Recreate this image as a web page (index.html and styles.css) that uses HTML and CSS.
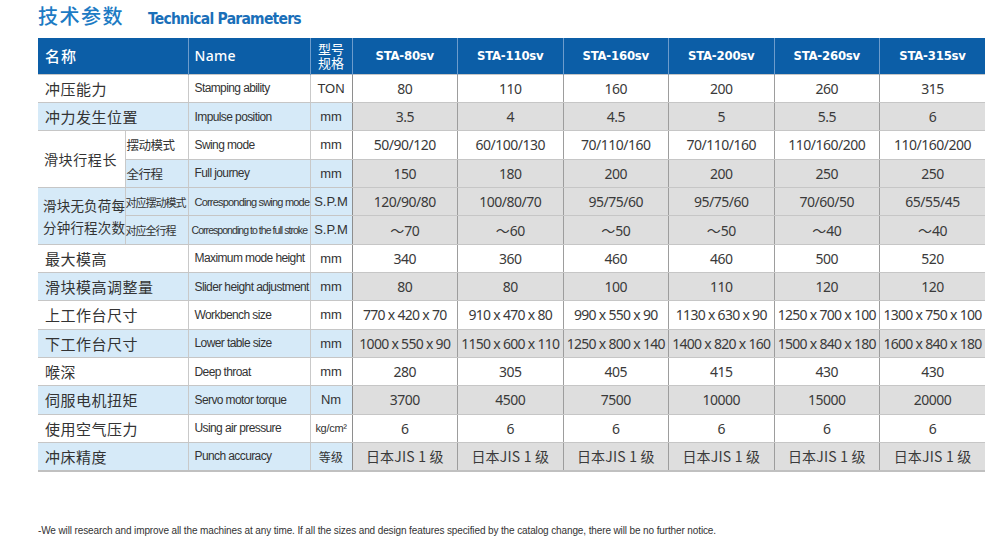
FILE: index.html
```html
<!DOCTYPE html>
<html lang="zh">
<head>
<meta charset="utf-8">
<title>技术参数 Technical Parameters</title>
<link rel="stylesheet" href="styles.css">
</head>
<body>
<div class="page">
  <div class="title">
    <span class="title-cn">技术参数</span>
    <span class="title-en">Technical Parameters</span>
  </div>
  <table class="spec">
    <colgroup>
      <col class="c-g"><col class="c-s"><col class="c-en"><col class="c-u">
      <col class="c-d"><col class="c-d"><col class="c-d"><col class="c-d"><col class="c-d"><col class="c-d">
    </colgroup>
    <thead>
      <tr>
        <th colspan="2" class="h-cn">名称</th>
        <th class="h-en">Name</th>
        <th class="h-u"><span class="ln">型号</span><span class="ln">规格</span></th>
        <th>STA-80sv</th><th>STA-110sv</th><th>STA-160sv</th><th>STA-200sv</th><th>STA-260sv</th><th>STA-315sv</th>
      </tr>
    </thead>
    <tbody>
      <tr>
        <td colspan="2" class="cn">冲压能力</td><td class="en">Stamping ability</td><td class="u">TON</td>
        <td>80</td><td>110</td><td>160</td><td>200</td><td>260</td><td>315</td>
      </tr>
      <tr class="alt">
        <td colspan="2" class="cn">冲力发生位置</td><td class="en">Impulse position</td><td class="u">mm</td>
        <td>3.5</td><td>4</td><td>4.5</td><td>5</td><td>5.5</td><td>6</td>
      </tr>
      <tr>
        <td rowspan="2" class="cn grp">滑块行程长</td><td class="sub">摆动模式</td><td class="en">Swing mode</td><td class="u">mm</td>
        <td>50/90/120</td><td>60/100/130</td><td>70/110/160</td><td>70/110/160</td><td>110/160/200</td><td>110/160/200</td>
      </tr>
      <tr class="alt">
        <td class="sub">全行程</td><td class="en">Full journey</td><td class="u">mm</td>
        <td>150</td><td>180</td><td>200</td><td>200</td><td>250</td><td>250</td>
      </tr>
      <tr class="alt">
        <td rowspan="2" class="cn grp two">滑块无负荷每<br>分钟行程次数</td><td class="sub tight">对应摆动模式</td><td class="en tight">Corresponding swing mode</td><td class="u">S.P.M</td>
        <td>120/90/80</td><td>100/80/70</td><td>95/75/60</td><td>95/75/60</td><td>70/60/50</td><td>65/55/45</td>
      </tr>
      <tr class="alt">
        <td class="sub tight">对应全行程</td><td class="en tighter">Corresponding to the full stroke</td><td class="u">S.P.M</td>
        <td><span class="tilde">～</span>70</td><td><span class="tilde">～</span>60</td><td><span class="tilde">～</span>50</td><td><span class="tilde">～</span>50</td><td><span class="tilde">～</span>40</td><td><span class="tilde">～</span>40</td>
      </tr>
      <tr>
        <td colspan="2" class="cn">最大模高</td><td class="en">Maximum mode height</td><td class="u">mm</td>
        <td>340</td><td>360</td><td>460</td><td>460</td><td>500</td><td>520</td>
      </tr>
      <tr class="alt">
        <td colspan="2" class="cn">滑块模高调整量</td><td class="en">Slider height adjustment</td><td class="u">mm</td>
        <td>80</td><td>80</td><td>100</td><td>110</td><td>120</td><td>120</td>
      </tr>
      <tr>
        <td colspan="2" class="cn">上工作台尺寸</td><td class="en">Workbench size</td><td class="u">mm</td>
        <td class="dim">770 x 420 x 70</td><td class="dim">910 x 470 x 80</td><td class="dim">990 x 550 x 90</td><td class="dim">1130 x 630 x 90</td><td class="dim">1250 x 700 x 100</td><td class="dim">1300 x 750 x 100</td>
      </tr>
      <tr class="alt">
        <td colspan="2" class="cn">下工作台尺寸</td><td class="en">Lower table size</td><td class="u">mm</td>
        <td class="dim">1000 x 550 x 90</td><td class="dim">1150 x 600 x 110</td><td class="dim">1250 x 800 x 140</td><td class="dim">1400 x 820 x 160</td><td class="dim">1500 x 840 x 180</td><td class="dim">1600 x 840 x 180</td>
      </tr>
      <tr>
        <td colspan="2" class="cn">喉深</td><td class="en">Deep throat</td><td class="u">mm</td>
        <td>280</td><td>305</td><td>405</td><td>415</td><td>430</td><td>430</td>
      </tr>
      <tr class="alt">
        <td colspan="2" class="cn">伺服电机扭矩</td><td class="en">Servo motor torque</td><td class="u">Nm</td>
        <td>3700</td><td>4500</td><td>7500</td><td>10000</td><td>15000</td><td>20000</td>
      </tr>
      <tr>
        <td colspan="2" class="cn">使用空气压力</td><td class="en">Using air pressure</td><td class="u small">kg/cm²</td>
        <td>6</td><td>6</td><td>6</td><td>6</td><td>6</td><td>6</td>
      </tr>
      <tr class="alt">
        <td colspan="2" class="cn">冲床精度</td><td class="en">Punch accuracy</td><td class="u cjk">等级</td>
        <td class="cjk">日本JIS 1 级</td><td class="cjk">日本JIS 1 级</td><td class="cjk">日本JIS 1 级</td><td class="cjk">日本JIS 1 级</td><td class="cjk">日本JIS 1 级</td><td class="cjk">日本JIS 1 级</td>
      </tr>
    </tbody>
  </table>
  <p class="note">-We will research and improve all the machines at any time. If all the sizes and design features specified by the catalog change, there will be no further notice.</p>
</div>
</body>
</html>
```

FILE: styles.css
```css
* { box-sizing: border-box; }

body {
  margin: 0;
  background: #ffffff;
  color: #333333;
  font-family: "Noto Sans CJK SC", "Noto Sans", sans-serif;
}

.page {
  width: 1000px;
  height: 542px;
  padding: 0 0 0 38px;
  overflow: hidden;
}

.title {
  display: flex;
  align-items: baseline;
  gap: 24px;
  height: 38px;
  padding-top: 1px;
}

.title-cn {
  font-family: "Noto Sans CJK SC", sans-serif;
  font-size: 20px;
  font-weight: 500;
  color: #1d7bc4;
  letter-spacing: 1.5px;
}

.title-en {
  font-family: "DejaVu Sans Condensed", "DejaVu Sans", sans-serif;
  font-weight: bold;
  font-size: 15.5px;
  color: #1a6fb9;
  letter-spacing: -0.75px;
}

.spec {
  border-collapse: collapse;
  table-layout: fixed;
  width: 947px;
}

.c-g { width: 87px; }
.c-s { width: 63px; }
.c-en { width: 122px; }
.c-u { width: 42px; }
.c-d { width: 105.5px; }

.spec th {
  height: 36px;
  background: #0c5ea7;
  color: #ffffff;
  font-family: "DejaVu Sans Condensed", "DejaVu Sans", sans-serif;
  font-weight: bold;
  font-size: 13px;
  letter-spacing: -0.2px;
  border-left: 1px solid #6d9ccc;
  padding: 0;
  text-align: center;
}

.spec th:first-child { border-left: none; }

.spec th.h-cn {
  text-align: left;
  padding-left: 7px;
  font-family: "Noto Sans CJK SC", sans-serif;
  font-weight: 500;
  font-size: 15px;
  letter-spacing: 1px;
}

.spec th.h-en {
  text-align: left;
  padding-left: 6px;
  font-family: "Noto Sans", sans-serif;
  font-weight: 500;
  font-size: 14px;
  letter-spacing: 0.3px;
}

.spec th.h-u {
  font-family: "Noto Sans CJK SC", sans-serif;
  font-weight: 400;
  font-size: 13px;
  letter-spacing: 0;
}

.ln {
  display: block;
  height: 14px;
  line-height: 14px;
}

.spec td {
  height: 28.35px;
  padding: 0;
  text-align: center;
  vertical-align: middle;
  white-space: nowrap;
  overflow: visible;
  font-family: "Noto Sans", sans-serif;
  font-size: 14px;
  letter-spacing: -0.5px;
  color: #3a3a3a;
  background: #ffffff;
  border-top: 1px solid #c6c6c6;
  border-bottom: 1px solid #c6c6c6;
  border-left: 1px solid #9d9d9d;
}

.spec tbody tr:last-child td { border-bottom: 2px solid #c0c0c0; }

.spec tr.alt td { background: #dedede; }

.spec td.cn,
.spec td.sub,
.spec td.en,
.spec td.u { border-left: 1px solid #c9c9c9; }

.spec td.cn {
  text-align: left;
  padding-left: 7px;
  font-family: "Noto Sans CJK SC", sans-serif;
  font-size: 15px;
  letter-spacing: 0.5px;
  color: #333333;
  border-left: none;
}

.spec td.cn.grp {
  font-size: 14px;
  letter-spacing: 0.6px;
  padding-left: 6px;
}

.spec td.cn.two {
  font-size: 13.5px;
  line-height: 22px;
  padding-left: 5px;
  letter-spacing: 0.2px;
}

.spec td.sub {
  text-align: left;
  padding-left: 1px;
  font-family: "Noto Sans CJK SC", sans-serif;
  font-size: 12.5px;
  letter-spacing: -0.5px;
  color: #333333;
}

.spec td.sub.tight {
  font-size: 11px;
  letter-spacing: -1px;
  padding-left: 0;
}

.spec td.en {
  text-align: left;
  padding-left: 6px;
  font-family: "Liberation Sans", sans-serif;
  font-size: 12px;
  letter-spacing: -0.6px;
  color: #333333;
}

.spec td.en.tight { font-size: 11px; letter-spacing: -0.8px; }
.spec td.en.tighter { font-size: 10.5px; letter-spacing: -0.95px; padding-left: 3px; }

.spec td.u {
  font-family: "Liberation Sans", sans-serif;
  font-size: 13px;
  letter-spacing: 0;
  color: #333333;
}

.spec td.u.small { font-size: 11px; letter-spacing: -0.3px; }

.spec td.u.cjk { font-size: 12px; }

.spec td.cn,
.spec td.sub,
.spec td.en,
.spec td.u { background: #ffffff; }

.spec tr.alt td.cn,
.spec tr.alt td.sub,
.spec tr.alt td.en,
.spec tr.alt td.u { background: #d6eaf8; }

.spec td.u + td { border-left: 1px solid #8e8e8e; }

.spec td.dim { letter-spacing: -0.7px; font-size: 14px; }

.spec td.cjk {
  font-family: "Noto Sans CJK SC", sans-serif;
  font-size: 14px;
  letter-spacing: 0.2px;
}

.tilde {
  font-family: "Noto Sans CJK SC", sans-serif;
  font-size: 14px;
  letter-spacing: 0;
}

.note {
  margin: 53px 0 0 0;
  font-family: "Liberation Sans", sans-serif;
  font-size: 10px;
  letter-spacing: -0.12px;
  color: #333333;
}
```
